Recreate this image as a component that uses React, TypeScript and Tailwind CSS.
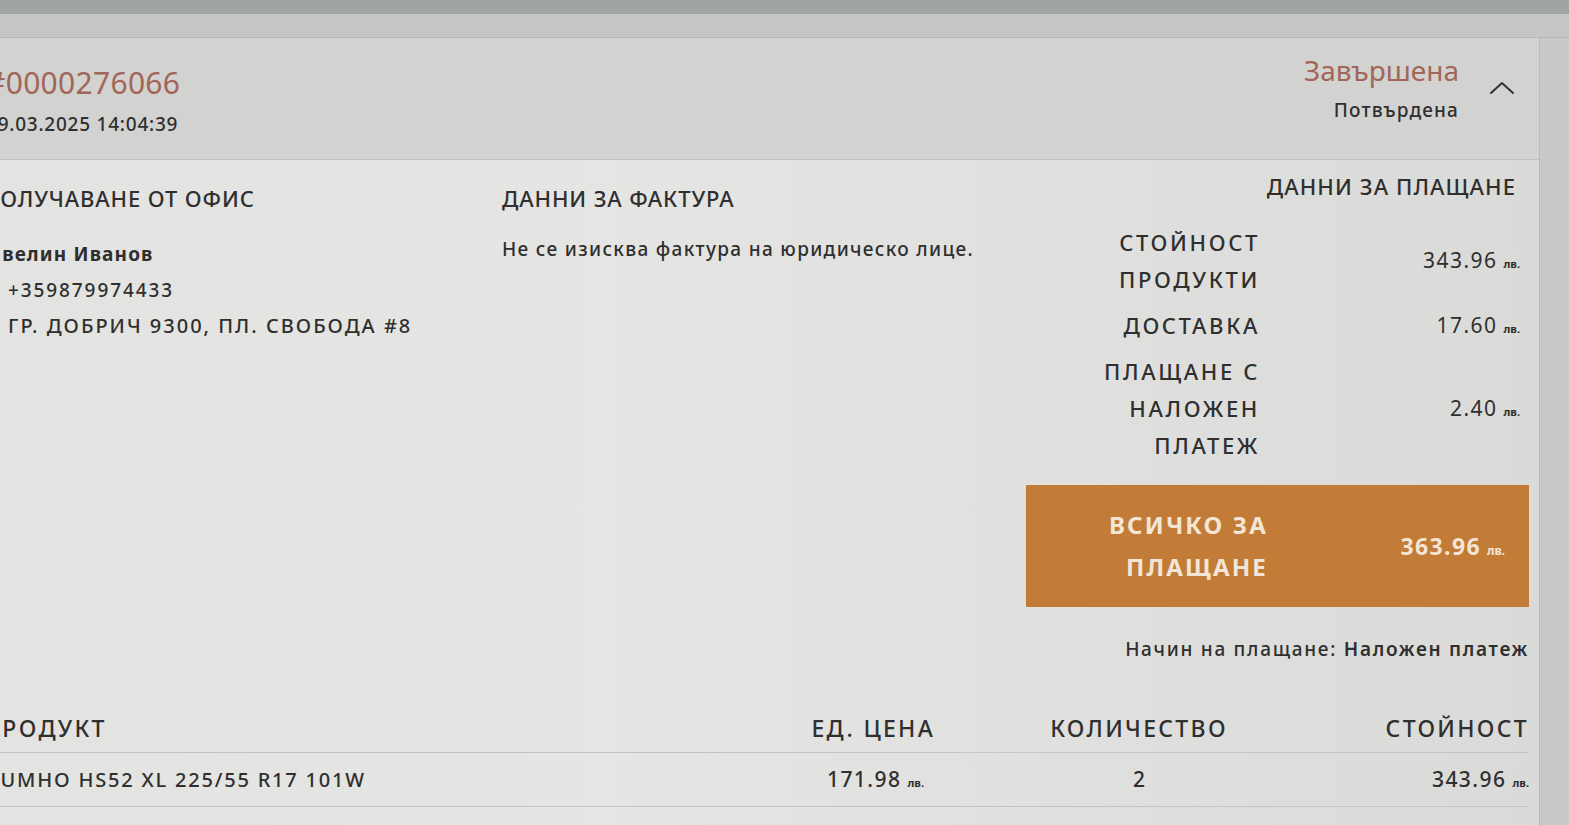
interface PayRow {
  label: string[];
  value: string;
}

const payRows: PayRow[] = [
  { label: ["СТОЙНОСТ", "ПРОДУКТИ"], value: "343.96" },
  { label: ["ДОСТАВКА"], value: "17.60" },
  { label: ["ПЛАЩАНЕ С", "НАЛОЖЕН", "ПЛАТЕЖ"], value: "2.40" },
];

function Price({ value, light }: { value: string; light?: boolean }) {
  if (light) {
    return (
      <span className="whitespace-nowrap text-[#f3e6d6] font-bold">
        <span className="text-[23px] tracking-[0.06em]">{value}</span>
        <span className="ml-[6px] text-[12px]">лв.</span>
      </span>
    );
  }
  return (
    <span className="whitespace-nowrap text-[#2f2f2f]">
      <span className="text-[21px] tracking-[0.07em]">{value}</span>
      <span className="ml-[6px] text-[11px] font-bold">лв.</span>
    </span>
  );
}

export default function App() {
  return (
    <div className="w-full h-[825px] overflow-hidden bg-[#cdcdcb] font-['Noto_Sans',sans-serif] text-[#2f2f2f]">
      <div className="h-[14px] bg-[#a0a5a3]"></div>
      <div className="h-[24px] bg-[#c6c6c4] border-b border-[#b6b6b4]"></div>

      <div className="flex">
        <div className="-ml-[14px] w-[1554px] shrink-0 border-r border-[#b9b9b7]">
          {/* order header */}
          <div className="h-[122px] bg-[#d2d2d0] border-b border-[#c0c0be] flex justify-between">
            <div className="pt-[27px]">
              <div className="text-[30px] leading-[36px] text-[#a26659] tracking-[0.01em]">#0000276066</div>
              <div className="mt-[9px] text-[19px] leading-[28px] font-medium tracking-[0.04em]">19.03.2025 14:04:39</div>
            </div>
            <div className="flex items-start pr-[24px]">
              <div className="pt-[15px] text-right">
                <div className="text-[28px] leading-[34px] text-[#a26659]">Завършена</div>
                <div className="mt-[10px] text-[19px] leading-[26px] font-medium tracking-[0.06em]">Потвърдена</div>
              </div>
              <svg width="26" height="15" viewBox="0 0 26 15" className="ml-[30px] mt-[42px]" fill="none">
                <polyline points="2,13 13,3 24,13" stroke="#333" strokeWidth="2" strokeLinecap="round" strokeLinejoin="round" />
              </svg>
            </div>
          </div>

          {/* body */}
          <div className="bg-[linear-gradient(90deg,#e3e3e1_0%,#e5e5e3_40%,#dadad8_100%)] pr-[10px]">
            <div className="flex">
              <div className="w-[516px] shrink-0 pt-[24px]">
                <div className="-ml-[3px] text-[22px] leading-[28px] font-medium tracking-[0.04em]">ПОЛУЧАВАНЕ ОТ ОФИС</div>
                <div className="mt-[24px] leading-[36px]">
                  <div className="text-[19px] font-bold tracking-[0.06em]">Ивелин Иванов</div>
                  <div className="pl-[22px] text-[19px] font-medium tracking-[0.1em]">+359879974433</div>
                  <div className="pl-[22px] text-[20px] font-medium tracking-[0.1em]">ГР. ДОБРИЧ 9300, ПЛ. СВОБОДА #8</div>
                </div>
              </div>

              <div className="w-[524px] shrink-0 pt-[24px]">
                <div className="text-[22px] leading-[28px] font-medium tracking-[0.04em]">ДАННИ ЗА ФАКТУРА</div>
                <div className="mt-[19px] text-[19px] leading-[36px] font-medium tracking-[0.07em]">
                  Не се изисква фактура на юридическо лице.
                </div>
              </div>

              <div className="flex-1 pt-[12px]">
                <div className="pr-[13px] text-right text-[22px] leading-[28px] font-medium tracking-[0.05em]">ДАННИ ЗА ПЛАЩАНЕ</div>
                <div className="mt-[24px] flex flex-col gap-[9px]">
                  {payRows.map((row) => (
                    <div key={row.value} className="flex items-center">
                      <div className="w-[234px] text-right text-[22px] leading-[37px] font-medium tracking-[0.12em]">
                        {row.label.map((line) => (
                          <div key={line}>{line}</div>
                        ))}
                      </div>
                      <div className="w-[260px] text-right">
                        <Price value={row.value} />
                      </div>
                    </div>
                  ))}
                </div>

                <div className="mt-[21px] h-[122px] bg-[#c27c37] flex items-center">
                  <div className="w-[242px] text-right text-[24px] leading-[42px] font-bold tracking-[0.09em] text-[#f3e6d6]">
                    <div>ВСИЧКО ЗА</div>
                    <div>ПЛАЩАНЕ</div>
                  </div>
                  <div className="flex-1 pr-[24px] text-right">
                    <Price value="363.96" light />
                  </div>
                </div>

                <div className="mt-[30px] text-right text-[19px] leading-[24px] font-medium tracking-[0.09em]">
                  Начин на плащане: <span className="font-semibold">Наложен платеж</span>
                </div>
              </div>
            </div>

            {/* products */}
            <div className="mt-[44px]">
              <div className="grid grid-cols-[1fr_277px_260px_260px] h-[48px] items-center border-b border-[#c4c4c2] text-[23px] font-medium tracking-[0.1em]">
                <div className="-ml-[3px]">ПРОДУКТ</div>
                <div className="pr-[74px] text-right">ЕД. ЦЕНА</div>
                <div className="text-center">КОЛИЧЕСТВО</div>
                <div className="text-right">СТОЙНОСТ</div>
              </div>
              <div className="grid grid-cols-[1fr_277px_260px_260px] h-[54px] items-center border-b border-[#c4c4c2] font-medium">
                <div className="text-[20px] tracking-[0.09em]">KUMHO HS52 XL 225/55 R17 101W</div>
                <div className="pr-[85px] text-right">
                  <Price value="171.98" />
                </div>
                <div className="text-center text-[21px]">2</div>
                <div className="text-right">
                  <Price value="343.96" />
                </div>
              </div>
              <div className="h-[20px]"></div>
            </div>
          </div>
        </div>
        <div className="flex-1 bg-[#c9c9c7]"></div>
      </div>
    </div>
  );
}
